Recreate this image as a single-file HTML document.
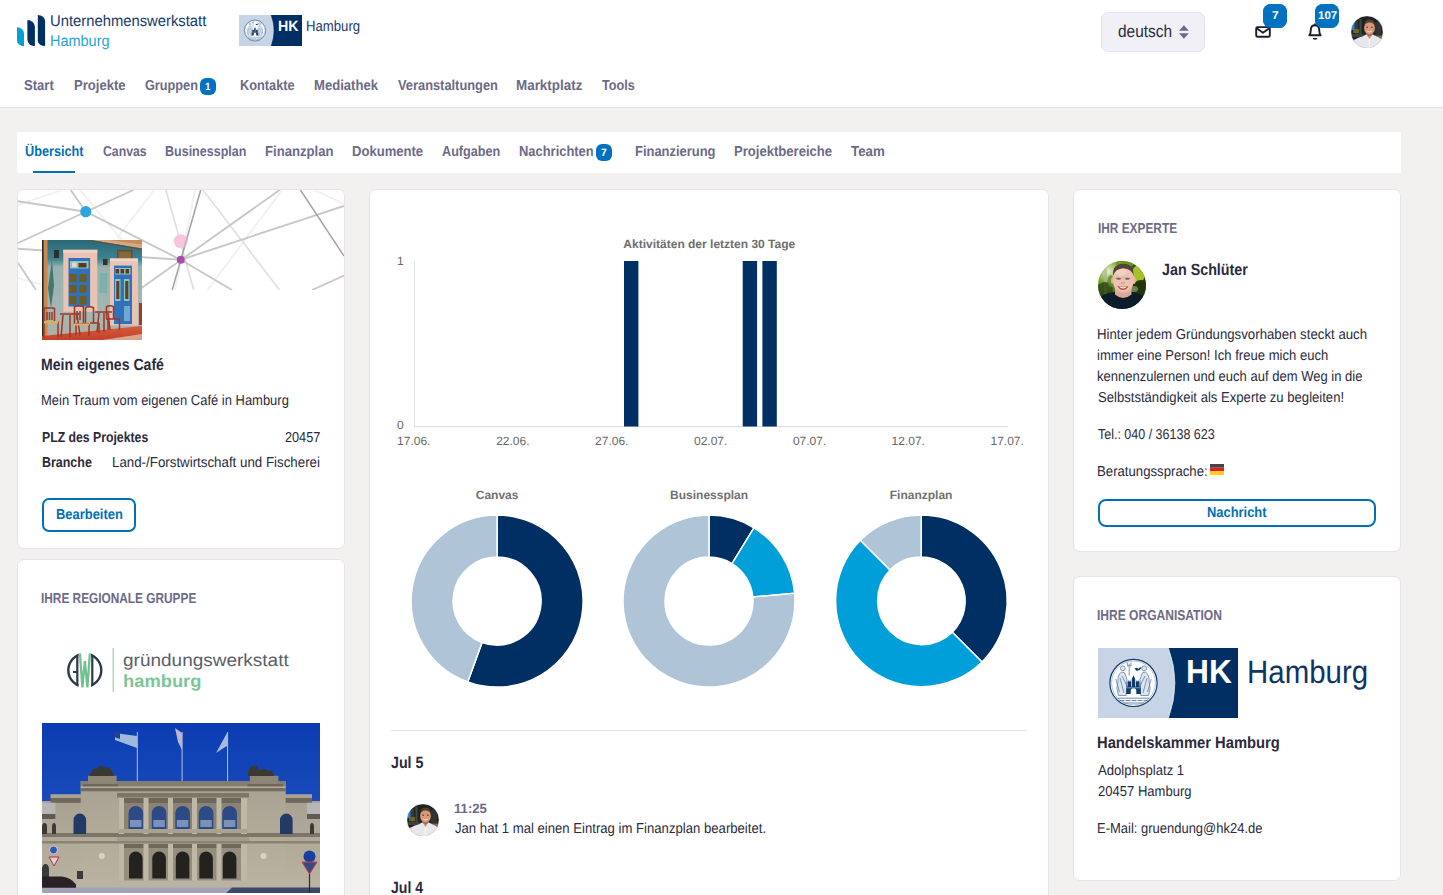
<!DOCTYPE html>
<html lang="de">
<head>
<meta charset="utf-8">
<title>Unternehmenswerkstatt Hamburg – Mein eigenes Café</title>
<style>
html,body{margin:0;padding:0;}
body{width:1443px;height:895px;overflow:hidden;position:relative;background:#f2f1ef;font-family:"Liberation Sans",sans-serif;}
.t{position:absolute;white-space:nowrap;line-height:1;text-rendering:geometricPrecision;transform-origin:0 0;font-family:"Liberation Sans",sans-serif;}
.abs{position:absolute;}
.card{position:absolute;background:#fff;border:1px solid #e5e4ee;border-radius:7px;box-sizing:border-box;overflow:hidden;}
.badge{position:absolute;background:#0072c1;}
.btn{position:absolute;box-sizing:border-box;border:2px solid #0070b9;background:#fff;}
svg{position:absolute;display:block;}
</style>
</head>
<body>
<!-- header -->
<div class="abs" style="left:0;top:0;width:1443px;height:107px;background:#fff;"></div>
<div class="abs" style="left:0;top:107px;width:1443px;height:1px;background:#e3e3ea;"></div>
<!-- language select -->
<div class="abs" style="left:1101px;top:12px;width:104px;height:40px;box-sizing:border-box;background:#f0f0f6;border:1px solid #e4e4ee;border-radius:7px;"></div>
<!-- nav badge -->
<div class="badge" style="left:200px;top:78px;width:16px;height:17px;border-radius:6px;"></div>
<!-- header badges -->
<div class="badge" style="left:1263px;top:4px;width:24px;height:24px;border-radius:8px;"></div>
<div class="badge" style="left:1315px;top:4px;width:24px;height:24px;border-radius:8px;"></div>
<!-- tab bar -->
<div class="abs" style="left:17px;top:132px;width:1384px;height:41px;background:#fff;"></div>
<div class="abs" style="left:33px;top:171px;width:42px;height:2px;background:#0070b9;"></div>
<div class="badge" style="left:596px;top:144px;width:16px;height:17px;border-radius:6px;"></div>
<!-- cards -->
<div class="card" style="left:17px;top:189px;width:328px;height:360px;"></div>
<div class="card" style="left:17px;top:559px;width:328px;height:400px;"></div>
<div class="card" style="left:369px;top:189px;width:680px;height:760px;"></div>
<div class="card" style="left:1073px;top:189px;width:328px;height:363px;"></div>
<div class="card" style="left:1073px;top:576px;width:328px;height:305px;"></div>
<!-- buttons -->
<div class="btn" style="left:42px;top:498px;width:94px;height:34px;border-radius:7px;"></div>
<div class="btn" style="left:1098px;top:499px;width:278px;height:28px;border-radius:8px;"></div>
<!-- hr in centre card -->
<div class="abs" style="left:391px;top:730px;width:636px;height:1px;background:#e3e3e8;"></div>
<!-- ===== header graphics ===== -->
<svg width="1443" height="110" viewBox="0 0 1443 110" style="left:0;top:0;">
  <defs>
    <symbol id="hklogo" viewBox="0 0 140 70" preserveAspectRatio="none">
      <rect x="0" y="0" width="140" height="70" fill="#003063"/>
      <path d="M0 0 H70.4 Q83.4 35 70.4 70 H0 Z" fill="#c7d4e5"/>
      <path d="M70.4 0 Q83.4 35 70.4 70" fill="none" stroke="#e6ecf4" stroke-width=".7"/>
      <circle cx="35.5" cy="34.9" r="23.6" fill="#fcfdff" stroke="#123a6b" stroke-width="1.2"/>
      <circle cx="35.5" cy="34.9" r="21.9" fill="none" stroke="#6f89ad" stroke-width="0.5"/>
      <!-- figures (line art) -->
      <g fill="#dfe6f0" stroke="#54709b" stroke-width="0.7" stroke-linejoin="round">
        <path d="M20.5 47.5 Q17.5 40 20 33.5 Q19.5 27 23.5 24 Q27 23.5 27.5 27 Q30 31 28.5 37 Q28.8 42 28.2 47.5 Z"/>
        <path d="M50.5 47.5 Q53.5 40 51 33.5 Q51.5 27 47.5 24 Q44 23.5 43.5 27 Q41 31 42.5 37 Q42.2 42 42.8 47.5 Z"/>
        <circle cx="24.8" cy="20.3" r="2.4"/><circle cx="46.2" cy="20.3" r="2.4"/>
      </g>
      <g fill="none" stroke="#54709b" stroke-width="0.7">
        <path d="M22 30 L26 45 M24 28 L29 38 M49 30 L45 45 M47 28 L42 38"/>
        <path d="M31.2 27.5 V15.5 M29.4 18 V14.5 M33 18 V14.5 M29.4 17.8 H33"/>
        <path d="M17.8 31 L21.5 44 M53.2 31 L49.5 44"/>
      </g>
      <path d="M36.5 20.5 q2.2 -1.8 3.8 0.4 q1.6 -2.4 3.2 -1.2 q-2 3.6 -5 3 z" fill="#123a6b"/>
      <!-- castle -->
      <path d="M28.2 45.9 V38.6 H29.5 V33.6 h0.9 v-1 h0.7 v1 h0.7 v-1 h0.7 v1 h0.6 V38.6 h0.7 V31 L35.5 27.2 L37.2 31 V38.6 h0.7 V33.6 h0.6 v-1 h0.7 v1 h0.7 v-1 h0.7 v1 h0.9 V38.6 H42.8 V45.9 H38.3 V43 a2.8 2.8 0 0 0 -5.6 0 V45.9 Z" fill="#123a6b"/>
      <path d="M28.2 39.8 H42.8" stroke="#fcfdff" stroke-width=".5"/>
      <!-- water -->
      <g fill="none" stroke="#54709b">
        <path d="M19.5 50.2 H51.5" stroke-width=".8"/><path d="M21.5 52.6 H49.5" stroke-width=".9" stroke-dasharray="5 1"/><path d="M24.5 55 H46.5" stroke-width=".8"/>
      </g>
    </symbol>
    <symbol id="avatarA" viewBox="0 0 32 32">
      <clipPath id="cA"><circle cx="16" cy="16" r="16"/></clipPath>
      <g clip-path="url(#cA)">
        <rect width="32" height="32" fill="#1d2421"/>
        <rect x="0" y="6" width="3.6" height="8" fill="#2b7fe0"/>
        <rect x="4" y="5" width="3" height="14" fill="#39443f" opacity=".8"/>
        <rect x="8.5" y="3" width="2" height="17" fill="#59645c" opacity=".6"/>
        <rect x="2" y="13" width="6" height="4" fill="#8a6a20" opacity=".8"/>
        <rect x="0" y="18" width="13" height="3" fill="#3c4641" opacity=".9"/>
        <rect x="24" y="6" width="6" height="13" fill="#2d3630"/>
        <rect x="26.5" y="10" width="3" height="6" fill="#5a2a2a" opacity=".7"/>
        <rect x="24" y="19.5" width="8" height="3.5" fill="#9a8a5c" opacity=".75"/>
        <rect x="0" y="23" width="4" height="3" fill="#c03040"/>
        <path d="M0 32 V27 Q4 22.5 11.5 20.6 L15.5 18.2 H21.5 L25.5 20.6 Q30.5 22.5 32 26 V32 Z" fill="#e7e7ec"/>
        <path d="M15 17.5 L18.5 23 L22 17.5 Z" fill="#c48a70"/>
        <path d="M18.3 23 V32" stroke="#f6f6fa" stroke-width="1.2"/>
        <ellipse cx="18.5" cy="11.9" rx="5.4" ry="7" fill="#d99878"/>
        <path d="M13 10.5 q0.3 -7.3 5.7 -7.1 q5.2 0 5.3 6.8 q-1.4 -3.6 -5.4 -3.6 q-4.2 0 -5.6 3.900z" fill="#5a3f30"/>
        <path d="M14.5 16.5 q4 3.3 8 0 q-0.8 3.3 -4 3.4 q-3.2 -0.1 -4 -3.400z" fill="#7a5040" opacity=".5"/>
        <ellipse cx="16.2" cy="11.2" rx="0.9" ry="0.7" fill="#5a4038"/>
        <ellipse cx="20.9" cy="11.2" rx="0.9" ry="0.7" fill="#5a4038"/>
        <path d="M16.2 15.2 q2.3 1.6 4.6 0" stroke="#f3dcd0" stroke-width="1" fill="none"/>
      </g>
      <circle cx="16" cy="16" r="16.3" fill="none" stroke="#e9e9f2" stroke-width=".7"/>
    </symbol>
  </defs>
  <!-- UW logo bars -->
  <path d="M17 27.2 A7 6 0 0 1 24 33.2 L24 46.2 A7 5.8 0 0 1 17 40.4 Z" fill="#009fd9"/>
  <path d="M27.4 20.1 A7.5 6.9 0 0 1 34.9 27 L34.9 46.1 A7.5 6.6 0 0 1 27.4 39.5 Z" fill="#003063"/>
  <path d="M37.8 14.9 A7.3 6.3 0 0 1 45.1 21.2 L45.1 46.1 A7.3 5.7 0 0 1 37.8 40.4 Z" fill="#003063"/>
  <!-- HK small logo -->
  <use href="#hklogo" x="239" y="15" width="63" height="31.1"/>
  <!-- select arrows -->
  <path d="M1179 30.7 L1183.9 25.3 L1188.8 30.7 Z M1179 33.3 L1183.9 38.7 L1188.8 33.3 Z" fill="#6c6a87"/>
  <!-- mail -->
  <rect x="1256.2" y="27.1" width="13.6" height="9.6" rx="1.3" fill="none" stroke="#1e1d2e" stroke-width="1.9"/>
  <path d="M1256.7 28.3 L1263 32.7 L1269.3 28.3" fill="none" stroke="#1e1d2e" stroke-width="1.9" stroke-linejoin="round"/>
  <!-- bell -->
  <path d="M1309.3 35.3 C1310.9 33.6 1310.7 31.4 1310.8 29.6 C1311 26.6 1312.9 25.3 1315 25.3 C1317.1 25.3 1319 26.6 1319.2 29.6 C1319.3 31.4 1319.1 33.6 1320.7 35.3 Z" fill="none" stroke="#1e1d2e" stroke-width="1.9" stroke-linejoin="round"/><path d="M1315 24 V25.5" stroke="#1e1d2e" stroke-width="1.6" stroke-linecap="round"/>
  <path d="M1312.6 38 h4.8 a2.4 1.8 0 0 1 -4.8 0z" fill="#1e1d2e"/>
  <!-- header avatar -->
  <use href="#avatarA" x="1351" y="16" width="32" height="32"/>
</svg>
<div class="badge" style="left:1263px;top:4px;width:24px;height:24px;border-radius:8px;"></div>
<div class="badge" style="left:1315px;top:4px;width:24px;height:24px;border-radius:8px;"></div>
<!-- ===== left card 1 banner (network) : page coords 18..344 x 190..290 ===== -->
<svg width="326" height="100" viewBox="18 190 326 100" style="left:18px;top:190px;border-radius:6px 6px 0 0;">
  <rect x="18" y="190" width="326" height="100" fill="#ffffff"/>
  <g fill="none" stroke-linecap="butt">
    <!-- faint lines -->
    <g stroke="#f0f0f0" stroke-width="1.8">
      <path d="M154.3 190 L117 238"/>
      <path d="M282 190 L207.6 290"/>
      <path d="M195 190 L175.2 290"/>
      <path d="M18 205 L62 190"/>
      <path d="M314.5 190 L344 204"/>
      <path d="M80 190 L130 250"/>
      <path d="M18 278 L60 290"/>
    </g>
    <!-- light lines -->
    <g stroke="#e0e0e0" stroke-width="1.7">
      <path d="M165.9 190 L193.7 290"/>
      <path d="M203 190 L279.6 290"/>
    </g>
    <!-- main grey lines -->
    <g stroke="#c8c8c8" stroke-width="1.9">
      <path d="M18 201.2 L85.8 211.7"/>
      <path d="M70.7 190 L85.8 211.7"/>
      <path d="M18 243 L133.4 190"/>
      <path d="M85.8 211.7 L180.8 259.8 L232 290"/>
      <path d="M18 248.8 L180.8 259.8"/>
      <path d="M279.6 190 L141.5 288"/>
      <path d="M180.8 259.8 L344 205.9"/>
      <path d="M344 275.5 L312 290"/>
      <path d="M18 262.8 L36 290"/>
    </g>
    <!-- darker thin lines -->
    <g stroke="#a2a2a2" stroke-width="1.5">
      <path d="M200.7 190 L172.2 290"/>
      <path d="M300.5 190 L344 256"/>
    </g>
  </g>
  <circle cx="180.8" cy="241.2" r="7" fill="#f5c6df"/>
  <path d="M187 238 L183.5 250" stroke="#a2a2a2" stroke-width="1.5" opacity=".6"/>
  <circle cx="85.8" cy="211.7" r="5.6" fill="#2ca5e0"/>
  <circle cx="180.8" cy="259.8" r="4" fill="#a54fa8"/>
</svg>

<!-- ===== café photo 100x100 at (42,240) ===== -->
<svg width="100" height="100" viewBox="0 0 100 100" style="left:42px;top:240px;">
  <defs>
    <linearGradient id="wall" x1="0" y1="0" x2="0" y2="1">
      <stop offset="0" stop-color="#2b6878"/><stop offset=".19" stop-color="#3d8290"/>
      <stop offset=".27" stop-color="#97b2b0"/><stop offset=".75" stop-color="#a6b6b2"/><stop offset="1" stop-color="#b0aea2"/>
    </linearGradient>
    <linearGradient id="floor" x1="0" y1="0" x2="0" y2="1"><stop offset="0" stop-color="#d85a3c"/><stop offset="1" stop-color="#c2402c"/></linearGradient>
  </defs>
  <rect width="100" height="100" fill="url(#wall)"/>
  <!-- upper right roof band -->
  <path d="M49 0 H100 V8.6 Z" fill="#d9a880"/>
  <path d="M66 0 H100 V4.5 Z" fill="#c98a5c"/>
  <path d="M49 0 L100 8.6 V10 L49 1.2 Z" fill="#5a4a3a" opacity=".7"/>
  <!-- left post -->
  <rect x="0" y="0" width="5.5" height="100" fill="#c9894c"/>
  <rect x="0" y="0" width="1.6" height="100" fill="#2a2a22"/>
  <!-- lamp shadows/plants -->
  <path d="M10 20 l-4 28 l3 20 l3 -22 z" fill="#3b6a66" opacity=".85"/>
  <rect x="12" y="10" width="5" height="8" fill="#2a2f2c"/>
  <rect x="61" y="19" width="4.5" height="6" fill="#3a3028"/>
  <path d="M58 33 h7 v20 h-8 z" fill="#7fb0ac"/>
  <!-- window 1 -->
  <rect x="21.3" y="9.8" width="34" height="62" fill="#e9c3b4"/><rect x="21.3" y="9.8" width="34" height="3" fill="#f0d4c6"/>
  <rect x="26.5" y="18" width="21.6" height="48.5" fill="#2f72bb"/>
  <rect x="28" y="21" width="18.5" height="7.5" fill="#8fc2c0"/>
  <rect x="30" y="22.5" width="4.5" height="4.5" fill="#e8d8c0"/><rect x="36.5" y="23" width="8" height="4.5" fill="#5a3a1c"/>
  <g fill="#6f5c22">
    <rect x="27.5" y="34" width="7" height="8"/><rect x="37.5" y="34" width="7" height="8"/>
    <rect x="27.5" y="45" width="7" height="8"/><rect x="37.5" y="45" width="7" height="8"/>
    <rect x="27.5" y="56" width="7" height="8"/><rect x="37.5" y="56" width="7" height="8"/>
  </g>
  <!-- door sign -->
  <rect x="75" y="9.8" width="15.5" height="11" fill="#6a4a2a"/>
  <rect x="76.5" y="11.5" width="12.5" height="7.5" fill="#86683c"/>
  <!-- door -->
  <rect x="68" y="18.5" width="28" height="67" fill="#e9c3b4"/><rect x="68" y="18.5" width="28" height="3" fill="#f0d4c6"/>
  <rect x="72" y="25.6" width="18" height="58.5" fill="#2f72bb"/>
  <rect x="73" y="28" width="15.5" height="6.5" fill="#8fc2c0"/>
  <g fill="#5a3a1c"><rect x="73.5" y="29" width="3.6" height="4.5"/><rect x="78.5" y="29" width="3.6" height="4.5"/><rect x="83.5" y="29" width="3.6" height="4.5"/></g>
  <rect x="73" y="39" width="5.5" height="22" fill="#8fc2c0"/><rect x="82" y="39" width="5.5" height="22" fill="#8fc2c0"/>
  <rect x="74.2" y="41" width="3.2" height="18" fill="#5e4222"/><rect x="83.2" y="41" width="3.2" height="18" fill="#5e4222"/>
  <rect x="82" y="66" width="6" height="15" fill="#6fa8d0"/>
  <!-- right edge chair -->
  <rect x="97" y="63" width="3" height="22" fill="#a63a28"/>
  <!-- floor -->
  <path d="M0 96 L40 92 L100 86 V100 H0 Z" fill="url(#floor)"/>
  <path d="M60 100 L100 94 V100 Z" fill="#d9a58a"/>
  <!-- tables and chairs -->
  <g stroke="#9e3626" stroke-width="1.5" fill="none">
    <path d="M1.5 68 h11 M2 68 v30 M12.5 68 v14 M2 82 h14 v15 M5 72 v8 M7.5 72 v8 M10 72 v8"/>
    <path d="M18 74 h20 M21 75 l-2 22 M28 75 v22 M35 75 l3 20"/>
    <path d="M32 67 q5 -2.5 10 0 M32.5 67 v17 M41.5 67 v17 M32 84 h15 M34 84 v11 M47 84 v12 M35 71 v9 M38 71 v9"/>
    <path d="M43 68 q4.5 -2.5 9 0 M43.5 68 v15 M51.5 68 v15 M48 83 h9 M57 83 v10"/>
    <path d="M53 72 h17 M57 73 l-2 19 M62 73 v19 M66 73 l2 17"/>
    <path d="M64 67 q4 -2.5 8 0 M64.5 67 v12 M71.5 67 v12 M64 79 h14 M66 79 v11 M77.5 79 v11"/>
  </g>
  <path d="M2 81 h14 v2.5 h-14z M32 83.5 h15 v2 h-15z" fill="#d8b060"/>
</svg>

<!-- ===== GWD logo ===== -->
<svg width="250" height="60" viewBox="55 640 250 60" style="left:55px;top:640px;">
  <circle cx="84.8" cy="670.3" r="16.5" fill="none" stroke="#2e3b48" stroke-width="2.4"/>
  <rect x="78.6" y="650" width="12.4" height="41" fill="#ffffff"/>
  <path d="M77.3 655.3 V685.3 M92.3 655.3 V685.3" stroke="#2e3b48" stroke-width="2.2"/>
  <path d="M73 672 H77.3" stroke="#2e3b48" stroke-width="2"/>
  <path d="M79.9 653.3 L82.4 687.3 L84.9 661 L87.4 687.3 L89.9 653.3" fill="none" stroke="#72c28f" stroke-width="2.3" stroke-linejoin="bevel"/>
  <path d="M113.2 648 V692" stroke="#93c9a6" stroke-width="1.1"/>
</svg>

<!-- ===== building photo 278x170 at (42,723.5) ===== -->
<svg width="278" height="170" viewBox="0 0 278 170" style="left:42px;top:723px;">
  <defs>
    <linearGradient id="sky" x1="0" y1="0" x2="0" y2="1"><stop offset="0" stop-color="#0b3cb2"/><stop offset="1" stop-color="#2a5cc6"/></linearGradient>
    <linearGradient id="stone" x1="0" y1="0" x2="0" y2="1"><stop offset="0" stop-color="#a9a191"/><stop offset="1" stop-color="#bcb4a3"/></linearGradient>
  </defs>
  <rect width="278" height="172" fill="url(#sky)"/>
  <!-- flags -->
  <g stroke="#c9cfdc" stroke-width="0.9"><path d="M95.3 9 V58 M140.1 9 V58 M185.6 9 V58"/></g>
  <path d="M73 10 L95 13 V25 L73 17 Z" fill="#9fb9dd"/><path d="M72 8 l6 2 v6 l-6 -2z" fill="#2a3d9a"/>
  <path d="M133 5 l7 5 v17 l-4 -8 z" fill="#b9b6cf"/>
  <path d="M185 10 l-11 20 l6 -4 l5 -3 z" fill="#aab9dd"/>
  <!-- wings -->
  <rect x="0" y="78" width="46" height="94" fill="url(#stone)"/>
  <rect x="232" y="78" width="46" height="94" fill="url(#stone)"/>
  <rect x="8.5" y="71.2" width="37" height="4" fill="#a9a191"/><rect x="8.5" y="75" width="37" height="4.8" fill="#6d675c"/><rect x="232" y="71.2" width="38" height="4" fill="#a9a191"/><rect x="232" y="75" width="38" height="4.8" fill="#6d675c"/>
  <rect x="0" y="79.8" width="13.3" height="11" fill="#b8b6b4"/><rect x="0" y="91" width="13.3" height="5" fill="#5f5a52"/><rect x="265" y="79.8" width="13" height="11" fill="#b8b6b4"/><rect x="265" y="91" width="13" height="5" fill="#5f5a52"/>
  <!-- central block -->
  <rect x="38.7" y="58" width="205" height="114" fill="url(#stone)"/>
  <rect x="38.7" y="58" width="205" height="5.5" fill="#857e6f"/>
  <rect x="46" y="52.8" width="28.6" height="8" fill="#8d8677"/><rect x="207.8" y="52.8" width="28.6" height="8" fill="#8d8677"/>
  <rect x="40.8" y="61" width="35.5" height="7" fill="#6d675c"/><rect x="205.5" y="61" width="35.5" height="7" fill="#6d675c"/>
  <!-- statues -->
  <path d="M48 53 q1 -9 7 -7 q3 -6 8 -1 q6 -3 9 8 z" fill="#3b382f"/>
  <path d="M206 53 q0 -11 6 -10 q3 -2 5 5 q5 -5 9 0 q5 -2 6 5 z" fill="#3b382f"/>
  <!-- entablatures / shadows -->
  <rect x="38.7" y="63.5" width="205" height="1.6" fill="#b5ad9c"/><rect x="38.7" y="65.1" width="205" height="3.2" fill="#746d60"/>
  <rect x="75" y="70" width="132" height="4.5" fill="#7d7668"/>
  <rect x="0" y="110" width="278" height="4" fill="#7d7668"/>
  <rect x="75" y="114" width="132" height="6" fill="#a49c8a"/>
  <rect x="0" y="118" width="278" height="2.5" fill="#8a8373"/>
  <!-- upper loggia shadow -->
  <rect x="77" y="75" width="128" height="33" fill="#8a8374"/><rect x="77" y="75" width="128" height="5" fill="#6d675c"/>
  <g fill="#c0b8a7"><rect x="77" y="75" width="5" height="36"/><rect x="101.5" y="75" width="5" height="36"/><rect x="126" y="75" width="5" height="36"/><rect x="150" y="75" width="5" height="36"/><rect x="174.5" y="75" width="5" height="36"/><rect x="199" y="75" width="6" height="36"/></g>
  <g fill="#2c4a86">
    <path d="M86.5 106 V90 a7.3 7 0 0 1 14.6 0 V106z"/><path d="M109.8 106 V90 a7.3 7 0 0 1 14.6 0 V106z"/>
    <path d="M133.3 106 V90 a7.3 7 0 0 1 14.6 0 V106z"/><path d="M156.8 106 V90 a7.3 7 0 0 1 14.6 0 V106z"/>
    <path d="M180.3 106 V90 a7.3 7 0 0 1 14.6 0 V106z"/>
  </g>
  <g fill="#8fa3c8" opacity=".8"><rect x="88" y="97" width="11.5" height="7"/><rect x="111.3" y="97" width="11.5" height="7"/><rect x="134.8" y="97" width="11.5" height="7"/><rect x="158.3" y="97" width="11.5" height="7"/><rect x="181.8" y="97" width="11.5" height="7"/></g>
  <rect x="77" y="106" width="128" height="4" fill="#aaa291"/>
  <!-- lower arcade -->
  <rect x="77" y="121" width="128" height="38" fill="#958e7e"/><rect x="77" y="121" width="128" height="4" fill="#6d675c"/>
  <g fill="#c0b8a7"><rect x="77" y="121" width="5" height="38"/><rect x="101.5" y="121" width="5" height="38"/><rect x="126" y="121" width="5" height="38"/><rect x="150" y="121" width="5" height="38"/><rect x="174.5" y="121" width="5" height="38"/><rect x="199" y="121" width="6" height="38"/></g>
  <g fill="#24221e">
    <path d="M87 155.5 V135.5 a6.8 7 0 0 1 13.6 0 V155.500z"/><path d="M110.3 155.5 V135.5 a6.8 7 0 0 1 13.6 0 V155.500z"/>
    <path d="M133.8 155.5 V135.5 a6.8 7 0 0 1 13.6 0 V155.500z"/><path d="M157.3 155.5 V135.5 a6.8 7 0 0 1 13.6 0 V155.500z"/>
    <path d="M180.8 155.5 V135.5 a6.8 7 0 0 1 13.6 0 V155.500z"/>
  </g>
  <!-- side windows -->
  <g fill="#243a66"><path d="M31.5 111 V97 a6.3 6.5 0 0 1 12.6 0 V111z"/><path d="M238 111 V97 a6.3 6.5 0 0 1 12.6 0 V111z"/></g>
  <g fill="#3a3a38"><path d="M0 111 V104 a2.5 4 0 0 1 5 0 V111z"/><path d="M10 111 V104 a2 4 0 0 1 4 0 V111z"/><path d="M268 111 V104 a2 4 0 0 1 4 0 V111z"/><path d="M0 158 V146 a3.5 5 0 0 1 7 0 V158z"/><rect x="35" y="148" width="6" height="8"/></g>
  <circle cx="59.8" cy="133" r="3" fill="#d7d2c6"/><circle cx="221.5" cy="133" r="3" fill="#d7d2c6"/>
  <!-- ground -->
  <rect x="0" y="157.5" width="278" height="7.5" fill="#b9b3a4"/>
  <rect x="0" y="164.6" width="278" height="6" fill="#a3a3b8"/>
  <path d="M190 164.6 H278 V172 H182 Z" fill="#3c4a66"/>
  <!-- car, signs -->
  <path d="M0 153.5 h20 q9 1 14 8 v3.2 H0 z" fill="#2a2028"/>
  <circle cx="11.5" cy="127" r="4" fill="#3457b0" stroke="#d9dde6" stroke-width=".8"/>
  <path d="M7 134 h10 l-5 9 z" fill="#d9d0d0" stroke="#b03040" stroke-width="1"/>
  <circle cx="267.5" cy="133.5" r="6" fill="#1b3f9c"/>
  <path d="M260 139 h15 l-7.5 12 z" fill="#3a4a80" stroke="#c04050" stroke-width="1"/>
  <path d="M267.5 151 V170" stroke="#2a2a30" stroke-width="1.2"/>
</svg>
<!-- ===== centre card charts ===== -->
<svg width="678" height="520" viewBox="370 190 678 520" style="left:370px;top:190px;">
  <rect x="414" y="261" width="1" height="166" fill="#e4e4e4"/>
  <rect x="414" y="426" width="594" height="1" fill="#dcdcdc"/>
  <rect x="624.0" y="261" width="14.4" height="165.5" fill="#003063"/>
  <rect x="742.7" y="261" width="14.4" height="165.5" fill="#003063"/>
  <rect x="762.4" y="261" width="14.4" height="165.5" fill="#003063"/>
  <path d="M497.10 515.10 A86 86 0 1 1 467.69 681.91 L482.05 642.45 A44 44 0 1 0 497.10 557.10 Z" fill="#003063" stroke="#ffffff" stroke-width="1.5" stroke-linejoin="round"/>
  <path d="M467.69 681.91 A86 86 0 0 1 497.10 515.10 L497.10 557.10 A44 44 0 0 0 482.05 642.45 Z" fill="#b0c4d8" stroke="#ffffff" stroke-width="1.5" stroke-linejoin="round"/>
  <path d="M709.00 515.10 A86 86 0 0 1 753.93 527.77 L731.99 563.58 A44 44 0 0 0 709.00 557.10 Z" fill="#003063" stroke="#ffffff" stroke-width="1.5" stroke-linejoin="round"/>
  <path d="M753.93 527.77 A86 86 0 0 1 794.63 593.16 L752.81 597.04 A44 44 0 0 0 731.99 563.58 Z" fill="#009fd9" stroke="#ffffff" stroke-width="1.5" stroke-linejoin="round"/>
  <path d="M794.63 593.16 A86 86 0 1 1 709.00 515.10 L709.00 557.10 A44 44 0 1 0 752.81 597.04 Z" fill="#b0c4d8" stroke="#ffffff" stroke-width="1.5" stroke-linejoin="round"/>
  <path d="M921.20 515.10 A86 86 0 0 1 982.01 661.91 L952.31 632.21 A44 44 0 0 0 921.20 557.10 Z" fill="#003063" stroke="#ffffff" stroke-width="1.5" stroke-linejoin="round"/>
  <path d="M982.01 661.91 A86 86 0 0 1 860.39 540.29 L890.09 569.99 A44 44 0 0 0 952.31 632.21 Z" fill="#009fd9" stroke="#ffffff" stroke-width="1.5" stroke-linejoin="round"/>
  <path d="M860.39 540.29 A86 86 0 0 1 921.20 515.10 L921.20 557.10 A44 44 0 0 0 890.09 569.99 Z" fill="#b0c4d8" stroke="#ffffff" stroke-width="1.5" stroke-linejoin="round"/>
</svg>
<!-- feed avatar -->
<svg width="32" height="32" viewBox="0 0 32 32" style="left:407px;top:804px;"><use href="#avatarA" x="0" y="0" width="32" height="32"/></svg>
<!-- ===== expert avatar 48px at (1098,261) ===== -->
<svg width="48" height="48" viewBox="0 0 48 48" style="left:1098px;top:261px;">
  <defs>
    <clipPath id="cB"><circle cx="24" cy="24" r="24"/></clipPath>
    <radialGradient id="bok" cx="0.22" cy="0.22" r="0.62"><stop offset="0" stop-color="#e6eecf"/><stop offset=".38" stop-color="#86a93a"/><stop offset="1" stop-color="#243a10"/></radialGradient>
  </defs>
  <g clip-path="url(#cB)">
    <rect width="48" height="48" fill="url(#bok)"/>
    <ellipse cx="27" cy="2" rx="9" ry="5" fill="#6f9a1e" opacity=".9"/>
    <ellipse cx="40.5" cy="13" rx="6.5" ry="9" fill="#b5cf2c" opacity=".9"/>
    <ellipse cx="43" cy="27" rx="8" ry="8" fill="#22360e"/>
    <ellipse cx="36" cy="28" rx="4" ry="3" fill="#7f9468" opacity=".8"/>
    <rect x="6.3" y="8" width="2.4" height="26" fill="#a9b59c" opacity=".75"/>
    <ellipse cx="7" cy="29" rx="8" ry="8" fill="#2a4312" opacity=".8"/>
    <ellipse cx="13" cy="20" rx="3.5" ry="6" fill="#5f8a24" opacity=".8"/>
    <!-- shoulders -->
    <path d="M0 48 V37.5 Q6 32 16.5 31 H33 Q43 32 48 37.5 V48 Z" fill="#0e1b2a"/>
    <!-- neck -->
    <path d="M17 27 H33.5 V33.5 Q25 40.5 17 33.5 Z" fill="#dca893"/>
    <!-- ears -->
    <ellipse cx="14.7" cy="19.5" rx="1.7" ry="3.2" fill="#e4ae9b"/><ellipse cx="36" cy="19.5" rx="1.8" ry="3.4" fill="#e9b7a5"/>
    <!-- face -->
    <path d="M14.8 16 Q14.3 5.5 25.3 5.5 Q35.8 5.5 35.8 16 Q36.2 25.5 31.5 30.5 Q25 35 19 30.5 Q14.5 25.5 14.8 16 Z" fill="#eec2b1"/>
    <ellipse cx="23" cy="11" rx="6" ry="3.5" fill="#f6d6c8" opacity=".7"/>
    <!-- hair -->
    <path d="M15 14.5 Q14.3 2.8 25.3 2.8 Q36 2.8 35.6 15 Q34 8 25.3 7.3 Q17.5 7.8 15 14.5 Z" fill="#51433a"/>
    <!-- glasses/eyes -->
    <path d="M16.3 17 H34.5" stroke="#c3a296" stroke-width=".7"/>
    <ellipse cx="20.6" cy="17.8" rx="2.4" ry="1" fill="#62704e"/><ellipse cx="29.4" cy="17.8" rx="2.4" ry="1" fill="#62704e"/>
    <!-- nose, smile, stubble -->
    <ellipse cx="24.9" cy="22" rx="2.2" ry="1.5" fill="#e0a593"/>
    <path d="M19.5 24.8 Q25 26.6 30.5 24.8 Q29 29 25 29 Q21 29 19.5 24.8 Z" fill="#b5564e"/>
    <path d="M21 25.5 Q25 27 29 25.5 Q27.5 27.6 25 27.6 Q22.5 27.6 21 25.500Z" fill="#f8efe9"/>
    <path d="M17.5 26.5 Q25 36 33 26.5 Q30.5 33 25 33.3 Q19.5 33 17.5 26.500Z" fill="#caa090" opacity=".5"/>
  </g>
</svg>
<!-- flag -->
<svg width="14" height="11" viewBox="0 0 14 11" style="left:1210px;top:464px;">
  <rect width="14" height="3.7" fill="#454545"/><rect y="3.7" width="14" height="3.6" fill="#dd1f1f"/><rect y="7.3" width="14" height="3.7" fill="#ffce1a"/>
</svg>
<!-- HK large logo 140x70 at (1098,648) -->
<svg width="140" height="70" viewBox="0 0 140 70" style="left:1098px;top:648px;"><use href="#hklogo" x="0" y="0" width="140" height="70"/></svg>

<!-- text -->
<span class="t" style="left:49.76px;top:14px;font-size:15.6px;font-weight:400;color:#173b6c;transform:scaleX(0.9493);">Unternehmenswerkstatt</span>
<span class="t" style="left:49.71px;top:34px;font-size:15.6px;font-weight:400;color:#2aa3dc;transform:scaleX(0.9278);">Hamburg</span>
<span class="t" style="left:277.95px;top:20px;font-size:14.8px;font-weight:700;color:#ffffff;transform:scaleX(0.9631);">HK</span>
<span class="t" style="left:305.72px;top:20px;font-size:14.8px;font-weight:400;color:#1d3c6e;transform:scaleX(0.8897);">Hamburg</span>
<span class="t" style="left:24.37px;top:79px;font-size:14.4px;font-weight:700;color:#6c6a87;transform:scaleX(0.9085);">Start</span>
<span class="t" style="left:73.93px;top:79px;font-size:14.4px;font-weight:700;color:#6c6a87;transform:scaleX(0.9069);">Projekte</span>
<span class="t" style="left:144.87px;top:79px;font-size:14.4px;font-weight:700;color:#6c6a87;transform:scaleX(0.8822);">Gruppen</span>
<span class="t" style="left:239.74px;top:79px;font-size:14.4px;font-weight:700;color:#6c6a87;transform:scaleX(0.8885);">Kontakte</span>
<span class="t" style="left:314.12px;top:79px;font-size:14.4px;font-weight:700;color:#6c6a87;transform:scaleX(0.9085);">Mediathek</span>
<span class="t" style="left:397.83px;top:79px;font-size:14.4px;font-weight:700;color:#6c6a87;transform:scaleX(0.8922);">Veranstaltungen</span>
<span class="t" style="left:516.10px;top:79px;font-size:14.4px;font-weight:700;color:#6c6a87;transform:scaleX(0.9324);">Marktplatz</span>
<span class="t" style="left:601.86px;top:79px;font-size:14.4px;font-weight:700;color:#6c6a87;transform:scaleX(0.8755);">Tools</span>
<span class="t" style="left:205.38px;top:82px;font-size:10.5px;font-weight:700;color:#ffffff;transform:scaleX(0.9358);">1</span>
<span class="t" style="left:1117.55px;top:23px;font-size:17.3px;font-weight:400;color:#2b2a3c;transform:scaleX(0.8927);">deutsch</span>
<span class="t" style="left:1271.80px;top:11px;font-size:11.2px;font-weight:700;color:#ffffff;transform:scaleX(1.0709);">7</span>
<span class="t" style="left:1317.58px;top:11px;font-size:11.2px;font-weight:700;color:#ffffff;transform:scaleX(1.0292);">107</span>
<span class="t" style="left:24.54px;top:145px;font-size:14.4px;font-weight:700;color:#0070b9;transform:scaleX(0.8826);">Übersicht</span>
<span class="t" style="left:102.89px;top:145px;font-size:14.4px;font-weight:700;color:#6c6a87;transform:scaleX(0.8522);">Canvas</span>
<span class="t" style="left:165.36px;top:145px;font-size:14.4px;font-weight:700;color:#6c6a87;transform:scaleX(0.8698);">Businessplan</span>
<span class="t" style="left:265.32px;top:145px;font-size:14.4px;font-weight:700;color:#6c6a87;transform:scaleX(0.9112);">Finanzplan</span>
<span class="t" style="left:352.32px;top:145px;font-size:14.4px;font-weight:700;color:#6c6a87;transform:scaleX(0.9075);">Dokumente</span>
<span class="t" style="left:442.44px;top:145px;font-size:14.4px;font-weight:700;color:#6c6a87;transform:scaleX(0.8784);">Aufgaben</span>
<span class="t" style="left:519.33px;top:145px;font-size:14.4px;font-weight:700;color:#6c6a87;transform:scaleX(0.8983);">Nachrichten</span>
<span class="t" style="left:635.33px;top:145px;font-size:14.4px;font-weight:700;color:#6c6a87;transform:scaleX(0.8989);">Finanzierung</span>
<span class="t" style="left:734.32px;top:145px;font-size:14.4px;font-weight:700;color:#6c6a87;transform:scaleX(0.9086);">Projektbereiche</span>
<span class="t" style="left:851.05px;top:145px;font-size:14.4px;font-weight:700;color:#6c6a87;transform:scaleX(0.9240);">Team</span>
<span class="t" style="left:601.37px;top:148px;font-size:10.5px;font-weight:700;color:#ffffff;transform:scaleX(0.9678);">7</span>
<span class="t" style="left:41.45px;top:357px;font-size:16.3px;font-weight:700;color:#2b2a3c;transform:scaleX(0.8653);">Mein eigenes Café</span>
<span class="t" style="left:41.34px;top:394px;font-size:14.4px;font-weight:400;color:#2b2a3c;transform:scaleX(0.9008);">Mein Traum vom eigenen Café in Hamburg</span>
<span class="t" style="left:41.58px;top:431px;font-size:14.4px;font-weight:700;color:#2b2a3c;transform:scaleX(0.8511);">PLZ des Projektes</span>
<span class="t" style="left:284.66px;top:431px;font-size:14.4px;font-weight:400;color:#2b2a3c;transform:scaleX(0.8817);">20457</span>
<span class="t" style="left:41.57px;top:456px;font-size:14.4px;font-weight:700;color:#2b2a3c;transform:scaleX(0.8653);">Branche</span>
<span class="t" style="left:112.11px;top:456px;font-size:14.4px;font-weight:400;color:#2b2a3c;transform:scaleX(0.9253);">Land-/Forstwirtschaft und Fischerei</span>
<span class="t" style="left:55.53px;top:508px;font-size:14.4px;font-weight:700;color:#0070b9;transform:scaleX(0.8985);">Bearbeiten</span>
<span class="t" style="left:41.21px;top:592px;font-size:14.4px;font-weight:700;color:#6c6a87;transform:scaleX(0.8229);">IHRE REGIONALE GRUPPE</span>
<span class="t" style="left:123.39px;top:652px;font-size:17.6px;font-weight:400;color:#5b6066;transform:scaleX(1.0793);">gründungswerkstatt</span>
<span class="t" style="left:123.12px;top:673px;font-size:17.6px;font-weight:700;color:#7cc595;transform:scaleX(1.0421);">hamburg</span>
<span class="t" style="left:623.37px;top:238px;font-size:12px;font-weight:700;color:#6e6e6e;">Aktivitäten der letzten 30 Tage</span>
<span class="t" style="left:396.99px;top:255px;font-size:12px;font-weight:400;color:#666666;">1</span>
<span class="t" style="left:397.09px;top:419px;font-size:12px;font-weight:400;color:#666666;">0</span>
<span class="t" style="left:397.10px;top:435px;font-size:12px;font-weight:400;color:#666666;">17.06.</span>
<span class="t" style="left:496.15px;top:435px;font-size:12px;font-weight:400;color:#666666;">22.06.</span>
<span class="t" style="left:595.05px;top:435px;font-size:12px;font-weight:400;color:#666666;">27.06.</span>
<span class="t" style="left:694.03px;top:435px;font-size:12px;font-weight:400;color:#666666;">02.07.</span>
<span class="t" style="left:792.93px;top:435px;font-size:12px;font-weight:400;color:#666666;">07.07.</span>
<span class="t" style="left:891.60px;top:435px;font-size:12px;font-weight:400;color:#666666;">12.07.</span>
<span class="t" style="left:990.50px;top:435px;font-size:12px;font-weight:400;color:#666666;">17.07.</span>
<span class="t" style="left:475.78px;top:489px;font-size:12px;font-weight:700;color:#707070;">Canvas</span>
<span class="t" style="left:670.08px;top:489px;font-size:12px;font-weight:700;color:#707070;">Businessplan</span>
<span class="t" style="left:889.73px;top:489px;font-size:12px;font-weight:700;color:#707070;">Finanzplan</span>
<span class="t" style="left:390.94px;top:755px;font-size:16.3px;font-weight:700;color:#2b2a3c;transform:scaleX(0.8746);">Jul 5</span>
<span class="t" style="left:454.47px;top:802px;font-size:13.4px;font-weight:700;color:#6c6a87;transform:scaleX(0.9819);">11:25</span>
<span class="t" style="left:455.03px;top:822px;font-size:14.4px;font-weight:400;color:#2b2a3c;transform:scaleX(0.9127);">Jan hat 1 mal einen Eintrag im Finanzplan bearbeitet.</span>
<span class="t" style="left:390.94px;top:880px;font-size:16.3px;font-weight:700;color:#2b2a3c;transform:scaleX(0.8655);">Jul 4</span>
<span class="t" style="left:1097.50px;top:222px;font-size:14.4px;font-weight:700;color:#6c6a87;transform:scaleX(0.8237);">IHR EXPERTE</span>
<span class="t" style="left:1162.34px;top:262px;font-size:16.3px;font-weight:700;color:#2b2a3c;transform:scaleX(0.8788);">Jan Schlüter</span>
<span class="t" style="left:1097.21px;top:328px;font-size:14.4px;font-weight:400;color:#2b2a3c;transform:scaleX(0.9200);">Hinter jedem Gründungsvorhaben steckt auch</span>
<span class="t" style="left:1097.42px;top:349px;font-size:14.4px;font-weight:400;color:#2b2a3c;transform:scaleX(0.9093);">immer eine Person! Ich freue mich euch</span>
<span class="t" style="left:1097.42px;top:370px;font-size:14.4px;font-weight:400;color:#2b2a3c;transform:scaleX(0.9048);">kennenzulernen und euch auf dem Weg in die</span>
<span class="t" style="left:1097.65px;top:391px;font-size:14.4px;font-weight:400;color:#2b2a3c;transform:scaleX(0.9101);">Selbstständigkeit als Experte zu begleiten!</span>
<span class="t" style="left:1098.01px;top:428px;font-size:14.4px;font-weight:400;color:#2b2a3c;transform:scaleX(0.8679);">Tel.: 040 / 36138 623</span>
<span class="t" style="left:1097.22px;top:465px;font-size:14.4px;font-weight:400;color:#2b2a3c;transform:scaleX(0.9165);">Beratungssprache:</span>
<span class="t" style="left:1207.14px;top:506px;font-size:14.4px;font-weight:700;color:#0070b9;transform:scaleX(0.8962);">Nachricht</span>
<span class="t" style="left:1097.49px;top:609px;font-size:14.4px;font-weight:700;color:#6c6a87;transform:scaleX(0.8365);">IHRE ORGANISATION</span>
<span class="t" style="left:1185.88px;top:656px;font-size:33.4px;font-weight:700;color:#ffffff;transform:scaleX(0.9497);">HK</span>
<span class="t" style="left:1246.98px;top:656px;font-size:32.5px;font-weight:400;color:#0f3564;transform:scaleX(0.9057);">Hamburg</span>
<span class="t" style="left:1097.31px;top:735px;font-size:16.3px;font-weight:700;color:#2b2a3c;transform:scaleX(0.9061);">Handelskammer Hamburg</span>
<span class="t" style="left:1098.22px;top:764px;font-size:14.4px;font-weight:400;color:#2b2a3c;transform:scaleX(0.9129);">Adolphsplatz 1</span>
<span class="t" style="left:1097.64px;top:785px;font-size:14.4px;font-weight:400;color:#2b2a3c;transform:scaleX(0.9066);">20457 Hamburg</span>
<span class="t" style="left:1097.24px;top:822px;font-size:14.4px;font-weight:400;color:#2b2a3c;transform:scaleX(0.9022);">E-Mail: gruendung@hk24.de</span>
</body>
</html>
